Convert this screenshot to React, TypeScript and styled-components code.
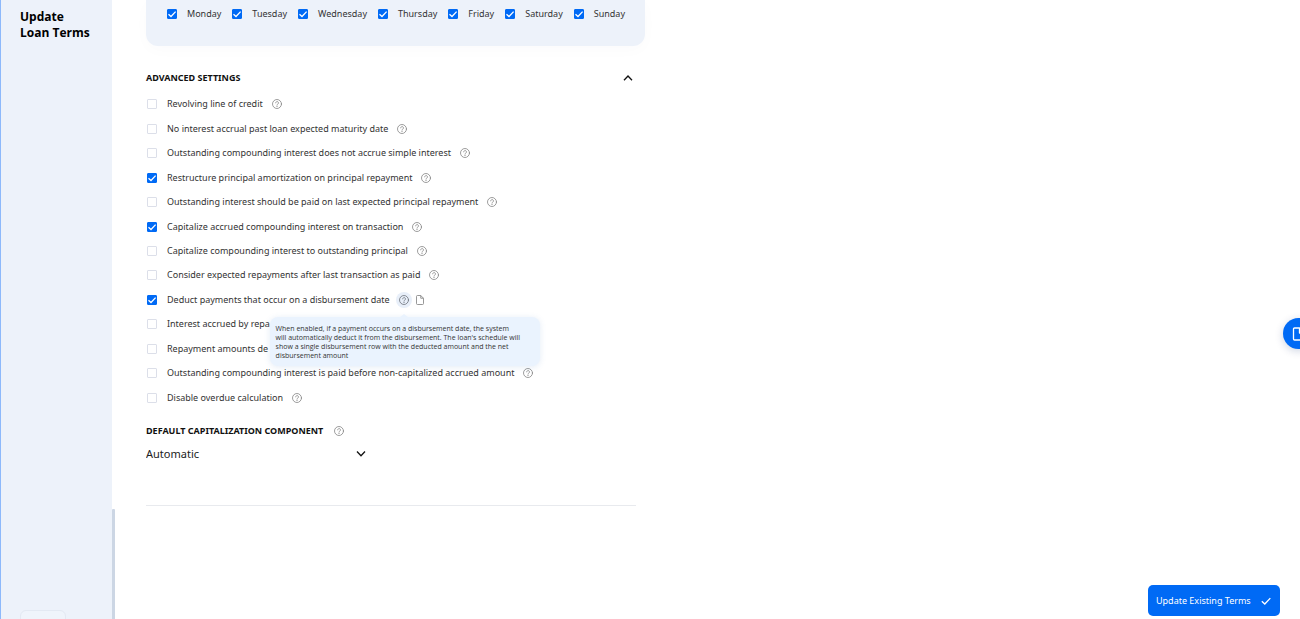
import React, { useState } from "react";
import styled, { createGlobalStyle } from "styled-components";

const GlobalStyle = createGlobalStyle`
  *, *::before, *::after { box-sizing: border-box; }
  body {
    margin: 0;
    background: #fff;
    color: #333;
    font-family: "Noto Sans", "Open Sans", sans-serif;
    font-size: 9px;
    line-height: 14px;
  }
  button, input, select { font-family: inherit; }
`;

const Page = styled.div`
  position: relative;
  display: flex;
  height: 100vh;
  overflow: hidden;
`;

const Sidebar = styled.aside`
  display: flex;
  flex: 0 0 112px;
  flex-direction: column;
  justify-content: space-between;
  align-items: flex-start;
  padding: 9px 16px 0 19px;
  border-left: 1px solid #8db9fb;
  background: #edf2fa;
`;

const Title = styled.h1`
  margin: 0;
  color: #000;
  font-family: "Open Sans", "Noto Sans", sans-serif;
  font-size: 12px;
  font-weight: 700;
  line-height: 16px;
`;

const SideButton = styled.button`
  width: 46px;
  height: 30px;
  margin-bottom: -21px;
  border: 1px solid #e3e9f3;
  border-radius: 6px;
  background: #eff4fb;
`;

const ScrollTrack = styled.div`
  display: flex;
  flex: 0 0 3px;
  flex-direction: column;
  justify-content: flex-end;
`;

const ScrollThumb = styled.div`
  height: 110px;
  background: #ccd6e4;
  border-radius: 1px 1px 0 0;
`;

const Main = styled.main`
  flex: 1;
  min-width: 0;
  padding: 0 31px;
`;

const DaysPanel = styled.div`
  display: flex;
  align-items: flex-start;
  gap: 11px;
  width: 499px;
  height: 46px;
  padding: 7px 21px 0;
  border-radius: 0 0 12px 12px;
  background: #edf2fa;
  box-shadow: 0 4px 16px rgba(30, 60, 120, 0.02);
`;

const CheckLabel = styled.label`
  display: flex;
  align-items: center;
  gap: 10px;
  white-space: nowrap;
`;

const Box = styled.span`
  display: grid;
  width: 10px;
  height: 10px;

  > * { grid-area: 1 / 1; }
  svg { pointer-events: none; }
`;

const BoxInput = styled.input`
  appearance: none;
  width: 10px;
  height: 10px;
  margin: 0;
  border: 1px solid #dcdfe9;
  border-radius: 1px;
  background: #fff;

  &:checked {
    border-color: #006af5;
    background: #006af5;
  }
`;

const Settings = styled.section`
  width: 490px;
  padding: 24px 0 42px;
  border-bottom: 1px solid #e8eaee;
`;

const SectionHeader = styled.div`
  display: flex;
  align-items: center;
  justify-content: space-between;
  height: 15px;
`;

const Heading = styled.h2`
  margin: 0;
  color: #111;
  font-size: 9px;
  font-weight: 700;
  line-height: 14px;
  text-transform: uppercase;
`;

const IconButton = styled.button<{ $active?: boolean }>`
  display: grid;
  place-items: center;
  width: 16px;
  height: 16px;
  padding: 0;
  border: 0;
  border-radius: 50%;
  background: ${(p) => (p.$active ? "#e8eff9" : "transparent")};
  color: ${(p) => (p.$active ? "#6f747c" : "#858585")};
`;

const OptionList = styled.ul`
  display: grid;
  grid-auto-rows: 1fr;
  height: 318px;
  margin: 7px 0 0;
  padding: 0 0 0 1px;
  list-style: none;
`;

const Option = styled.li`
  display: flex;
  align-items: center;
  gap: 6px;
`;

const HelpAnchor = styled.span`
  position: relative;
  display: flex;
`;

const Tooltip = styled.div`
  position: absolute;
  z-index: 1;
  top: 25px;
  left: -126px;
  width: 270px;
  padding: 7px 6px 6px;
  border-radius: 8px;
  background: #eaf3fe;
  box-shadow: 0 1px 6px rgba(60, 110, 190, 0.14);
  color: #333;
  font-family: "Open Sans", "Noto Sans", sans-serif;
  font-size: 7px;
  line-height: 9px;
  white-space: pre-line;

  &::before {
    content: "";
    position: absolute;
    top: -3px;
    left: 130px;
    border: solid transparent;
    border-width: 0 4px 3px;
    border-bottom-color: #eaf3fe;
  }
`;

const FieldHeader = styled.div`
  display: flex;
  align-items: center;
  gap: 8px;
  margin-top: 13px;
`;

const SelectWrap = styled.div`
  display: grid;
  align-items: center;
  justify-items: end;
  width: 220px;
  margin-top: 6px;

  > * { grid-area: 1 / 1; }
  svg { pointer-events: none; }
`;

const Select = styled.select`
  appearance: none;
  width: 100%;
  height: 18px;
  padding: 0;
  border: 0;
  background: transparent;
  color: #222;
  font-size: 11px;
  line-height: 18px;
`;

const ChatButton = styled.button`
  position: absolute;
  top: 318px;
  right: -14px;
  display: flex;
  align-items: center;
  width: 31px;
  height: 31px;
  padding: 0 0 0 9px;
  border: 0;
  border-radius: 50%;
  background: #006af5;
  box-shadow: 0 2px 8px rgba(0, 40, 110, 0.2);
  color: #fff;
`;

const SubmitButton = styled.button`
  position: absolute;
  right: 20px;
  bottom: 3px;
  display: flex;
  align-items: center;
  justify-content: space-between;
  width: 132px;
  height: 31px;
  padding: 0 8px;
  border: 0;
  border-radius: 5px;
  background: #006af5;
  color: #fff;
  font-size: 9px;
  line-height: 14px;
  white-space: nowrap;
`;

const HelpIcon = () => (
  <svg width="10" height="10" viewBox="0 0 20 20" fill="none" stroke="currentColor" strokeWidth="1.6" strokeLinecap="round">
    <circle cx="10" cy="10" r="9" />
    <path d="M7.3 7.7a2.8 2.8 0 1 1 4.3 2.5c-1 .6-1.6 1-1.6 2.1" />
    <path d="M10 15v.2" strokeWidth="2" />
  </svg>
);

const FileIcon = () => (
  <svg width="8" height="10" viewBox="0 0 16 20" fill="none" stroke="currentColor" strokeWidth="1.7" strokeLinejoin="round">
    <path d="M9.5 1H3a2 2 0 0 0-2 2v14a2 2 0 0 0 2 2h10a2 2 0 0 0 2-2V6.5zM9.5 1v5.500H15" />
  </svg>
);

const ChatIcon = () => (
  <svg width="16" height="16" viewBox="0 0 16 16" fill="none" stroke="currentColor" strokeWidth="1.3" strokeLinejoin="round">
    <path d="M7.500 2H2.500a1 1 0 0 0-1 1v10a1 1 0 0 0 1 1H13V7z" />
    <path d="M7.500 2v5H13" fill="currentColor" />
  </svg>
);

const Tick = ({ size, width }: { size: number; width: number }) => (
  <svg width={size} height={size} viewBox="0 0 10 10" fill="none" stroke="#fff" strokeWidth={width}>
    <path d="M1.500 5.200 4 7.500 8.600 2.600" />
  </svg>
);

const Chevron = ({ up = false }: { up?: boolean }) => (
  <svg width="10" height="10" viewBox="0 0 10 10" fill="none" stroke="#111" strokeWidth="1.300">
    <path d={up ? "M1 7.200 5 3l4 4.200" : "M1 2.500l4 4.200L9 2.500"} />
  </svg>
);

const Check = ({ label, initial }: { label: string; initial: boolean }) => {
  const [checked, setChecked] = useState(initial);
  return (
    <CheckLabel>
      <Box>
        <BoxInput type="checkbox" checked={checked} onChange={() => setChecked(!checked)} />
        {checked && <Tick size={10} width={1.3} />}
      </Box>
      {label}
    </CheckLabel>
  );
};

const days = ["Monday", "Tuesday", "Wednesday", "Thursday", "Friday", "Saturday", "Sunday"];

type Item = { label: string; checked?: boolean; tip?: string };

const options: Item[] = [
  { label: "Revolving line of credit" },
  { label: "No interest accrual past loan expected maturity date" },
  { label: "Outstanding compounding interest does not accrue simple interest" },
  { label: "Restructure principal amortization on principal repayment", checked: true },
  { label: "Outstanding interest should be paid on last expected principal repayment" },
  { label: "Capitalize accrued compounding interest on transaction", checked: true },
  { label: "Capitalize compounding interest to outstanding principal" },
  { label: "Consider expected repayments after last transaction as paid" },
  {
    label: "Deduct payments that occur on a disbursement date",
    checked: true,
    tip: [
      "When enabled, if a payment occurs on a disbursement date, the system",
      "will automatically deduct it from the disbursement. The loan's schedule will",
      "show a single disbursement row with the deducted amount and the net",
      "disbursement amount",
    ].join("\n"),
  },
  { label: "Interest accrued by repa" },
  { label: "Repayment amounts de" },
  { label: "Outstanding compounding interest is paid before non-capitalized accrued amount" },
  { label: "Disable overdue calculation" },
];

export default function App() {
  return (
    <>
      <GlobalStyle />
      <Page>
        <Sidebar>
          <Title>Update<br />Loan Terms</Title>
          <SideButton type="button" aria-label="Back" />
        </Sidebar>
        <ScrollTrack>
          <ScrollThumb />
        </ScrollTrack>
        <Main>
          <DaysPanel role="group" aria-label="Days">
            {days.map((d) => <Check key={d} label={d} initial />)}
          </DaysPanel>
          <Settings>
            <SectionHeader>
              <Heading>Advanced settings</Heading>
              <IconButton type="button" aria-label="Collapse"><Chevron up /></IconButton>
            </SectionHeader>
            <OptionList>
              {options.map((o) => (
                <Option key={o.label}>
                  <Check label={o.label} initial={!!o.checked} />
                  <HelpAnchor>
                    <IconButton type="button" aria-label="Help" $active={!!o.tip}><HelpIcon /></IconButton>
                    {o.tip && <IconButton type="button" aria-label="Document"><FileIcon /></IconButton>}
                    {o.tip && <Tooltip role="tooltip">{o.tip}</Tooltip>}
                  </HelpAnchor>
                </Option>
              ))}
            </OptionList>
            <FieldHeader>
              <Heading as="label" htmlFor="component">Default capitalization component</Heading>
              <IconButton type="button" aria-label="Help"><HelpIcon /></IconButton>
            </FieldHeader>
            <SelectWrap>
              <Select id="component" defaultValue="Automatic">
                <option>Automatic</option>
              </Select>
              <Chevron />
            </SelectWrap>
          </Settings>
        </Main>
        <ChatButton type="button" aria-label="Notes"><ChatIcon /></ChatButton>
        <SubmitButton type="button">Update Existing Terms<Tick size={12} width={1.1} /></SubmitButton>
      </Page>
    </>
  );
}
